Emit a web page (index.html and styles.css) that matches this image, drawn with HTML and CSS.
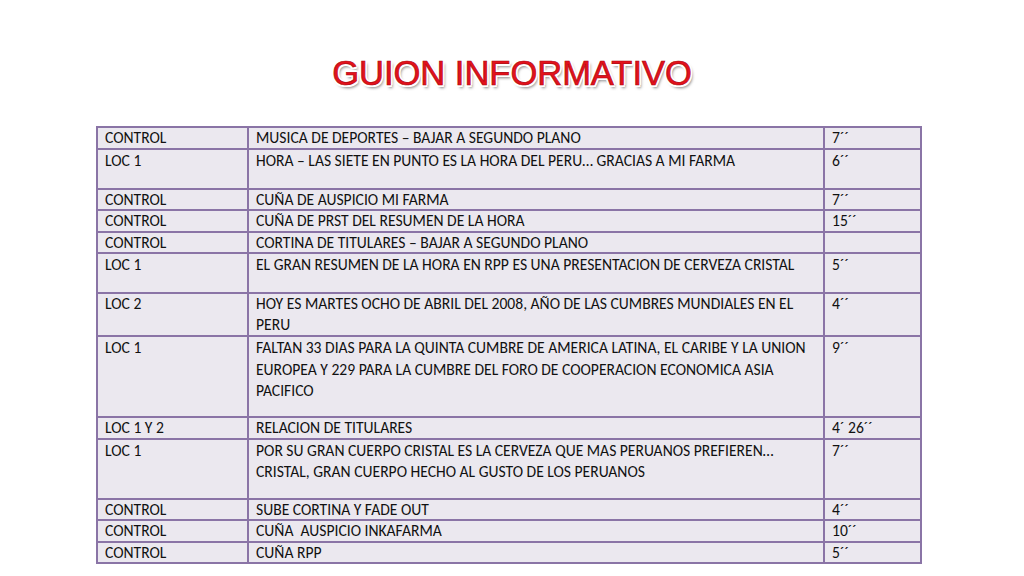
FILE: index.html
```html
<!DOCTYPE html>
<html lang="es">
<head>
<meta charset="utf-8">
<title>Guion informativo</title>
<link rel="stylesheet" href="styles.css">
</head>
<body>
<h1 class="title">GUION INFORMATIVO</h1>
<table class="script">
  <colgroup><col class="c1"><col class="c2"><col class="c3"></colgroup>
  <tr class="h1r"><td>CONTROL</td><td>MUSICA DE DEPORTES – BAJAR A SEGUNDO PLANO</td><td>7´´</td></tr>
  <tr class="h2r"><td>LOC 1</td><td>HORA – LAS SIETE EN PUNTO ES LA HORA DEL PERU… GRACIAS A MI FARMA</td><td>6´´</td></tr>
  <tr class="h1r"><td>CONTROL</td><td>CUÑA DE AUSPICIO MI FARMA</td><td>7´´</td></tr>
  <tr class="h1r"><td>CONTROL</td><td>CUÑA DE PRST DEL RESUMEN DE LA HORA</td><td>15´´</td></tr>
  <tr class="h1r"><td>CONTROL</td><td>CORTINA DE TITULARES – BAJAR A SEGUNDO PLANO</td><td></td></tr>
  <tr class="h2r"><td>LOC 1</td><td>EL GRAN RESUMEN DE LA HORA EN RPP ES UNA PRESENTACION DE CERVEZA CRISTAL</td><td>5´´</td></tr>
  <tr class="h3r"><td>LOC 2</td><td>HOY ES MARTES OCHO DE ABRIL DEL 2008, AÑO DE LAS CUMBRES MUNDIALES EN EL PERU</td><td>4´´</td></tr>
  <tr class="h4r"><td>LOC 1</td><td>FALTAN 33 DIAS PARA LA QUINTA CUMBRE DE AMERICA LATINA, EL CARIBE Y LA UNION EUROPEA Y 229 PARA LA CUMBRE DEL FORO DE COOPERACION ECONOMICA ASIA PACIFICO</td><td>9´´</td></tr>
  <tr class="h1r"><td>LOC 1 Y 2</td><td>RELACION DE TITULARES</td><td>4´ 26´´</td></tr>
  <tr class="h5r"><td>LOC 1</td><td>POR SU GRAN CUERPO CRISTAL ES LA CERVEZA QUE MAS PERUANOS PREFIEREN… CRISTAL, GRAN CUERPO HECHO AL GUSTO DE LOS PERUANOS</td><td>7´´</td></tr>
  <tr class="h1r"><td>CONTROL</td><td>SUBE CORTINA Y FADE OUT</td><td>4´´</td></tr>
  <tr class="h1r"><td>CONTROL</td><td>CUÑA &nbsp;AUSPICIO INKAFARMA</td><td>10´´</td></tr>
  <tr class="h1r"><td>CONTROL</td><td>CUÑA RPP</td><td>5´´</td></tr>
</table>
</body>
</html>
```
FILE: styles.css
```css
html, body {
  margin: 0;
  padding: 0;
  background: #ffffff;
}
body {
  width: 1024px;
  height: 576px;
  overflow: hidden;
  font-family: "Carlito", "Lato", "Liberation Sans", sans-serif;
}
.title {
  margin: 0 0 33px 0;
  padding-top: 53px;
  height: 40px;
  line-height: 40px;
  text-align: center;
  font-family: "Liberation Sans", Arial, sans-serif;
  font-weight: normal;
  font-size: 34.5px;
  color: #e3121c;
  -webkit-text-stroke: 0.7px #b0060e;
  text-shadow:
    2px 0 0 #fff, -2px 0 0 #fff, 0 2px 0 #fff, 0 -2px 0 #fff,
    1.5px 1.5px 0 #fff, -1.5px -1.5px 0 #fff, 1.5px -1.5px 0 #fff, -1.5px 1.5px 0 #fff,
    2px 3px 3px rgba(0, 0, 0, 0.5);
}
.script {
  margin-left: 96px;
  width: 824px;
  border-collapse: collapse;
  table-layout: fixed;
  background: #ebe8ef;
  border: 2px solid #8a74a6;
}
.c1 { width: 151px; }
.c2 { width: 576px; }
.c3 { width: 97px; }
.script td {
  border: 2px solid #8a74a6;
  padding: 0 7px;
  vertical-align: top;
  font-size: 15.6px;
  line-height: 21.5px;
  color: #111111;
  overflow: hidden;
}
.h1r td { height: 19.5px; line-height: 19.5px; }
.h2r td { height: 38px; }
.h3r td { height: 41px; line-height: 20.5px; }
.h4r td { height: 79px; }
.h5r td { height: 58px; }
```
